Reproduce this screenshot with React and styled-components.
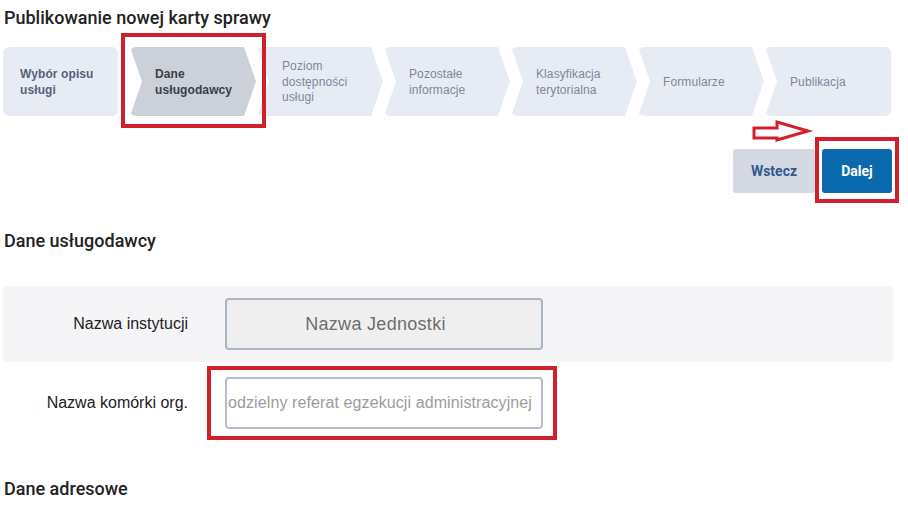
import React from "react";
import styled, { createGlobalStyle } from "styled-components";

const GlobalStyle = createGlobalStyle`
  html, body { margin: 0; padding: 0; background: #fff; }
  body { font-family: Roboto, "Liberation Sans", Arial, sans-serif; }
  * { box-sizing: border-box; }
`;

const RED = "#d11f2b";

const Page = styled.div`
  position: relative;
  width: 908px;
  height: 522px;
  overflow: hidden;
  padding: 8px 16px 0 3px;
`;

const Title = styled.h1`
  margin: 0 0 0 1px;
  font-family: Roboto, "Liberation Sans", sans-serif;
  font-weight: 500;
  font-size: 18px;
  line-height: 20px;
  color: #222;
`;

const SectionTitle = styled(Title)`
  margin-top: ${(p) => p.$top}px;
`;

const Stepper = styled.div`
  display: flex;
  gap: 1px;
  margin-top: 19px;
  height: 69px;
`;

const Step = styled.div`
  flex: 0 0 auto;
  width: ${(p) => (p.$first ? "115px" : "126px")};
  margin-right: ${(p) => (p.$first ? "11px" : "0")};
  height: 100%;
  display: flex;
  align-items: center;
  padding-top: 2px;
  padding-left: ${(p) => (p.$first ? "17px" : "25px")};
  padding-right: 14px;
  background: ${(p) => (p.$active ? "#cbd0d9" : "#e7ecf4")};
  border-radius: 6px;
  clip-path: ${(p) =>
    p.$first
      ? "none"
      : p.$last
      ? "polygon(0 0, 100% 0, 100% 100%, 0 100%, 12px 50%)"
      : "polygon(0 0, calc(100% - 12px) 0, 100% 50%, calc(100% - 12px) 100%, 0 100%, 12px 50%)"};
  font-family: "Liberation Sans", Arial, sans-serif;
  font-size: 12px;
  line-height: 15.5px;
  letter-spacing: 0.1px;
  font-weight: ${(p) => (p.$bold ? 700 : 400)};
  color: ${(p) => (p.$active ? "#3a3f4b" : p.$bold ? "#56627a" : "#7e8797")};
`;

const ButtonRow = styled.div`
  display: flex;
  justify-content: flex-end;
  gap: 7px;
  margin-top: 33px;
`;

const Button = styled.button`
  height: 44px;
  width: ${(p) => p.$w}px;
  border: none;
  border-radius: 3px;
  font-family: Roboto, "Liberation Sans", sans-serif;
  font-weight: 700;
  font-size: 14px;
  background: ${(p) => (p.$primary ? "#0b6aae" : "#d4d9e3")};
  color: ${(p) => (p.$primary ? "#ffffff" : "#2f5c8c")};
  cursor: pointer;
`;

const Panel = styled.div`
  margin-top: 35px;
  width: 890px;
`;

const Row = styled.div`
  display: flex;
  align-items: center;
  gap: 37px;
  height: ${(p) => p.$h}px;
  background: ${(p) => (p.$shaded ? "#f5f5f7" : "transparent")};
`;

const Label = styled.div`
  width: 185px;
  text-align: right;
  font-family: "Liberation Sans", Arial, sans-serif;
  font-size: 16px;
  color: #222;
`;

const Field = styled.div`
  width: 318px;
  height: 52px;
  display: flex;
  align-items: center;
  justify-content: ${(p) => (p.$readonly ? "center" : "flex-end")};
  padding: ${(p) => (p.$readonly ? "0 26px 0 9px" : "0 9px")};
  overflow: hidden;
  white-space: nowrap;
  border: 2px solid ${(p) => (p.$readonly ? "#a9b4c5" : "#b6bdc9")};
  border-radius: 4px;
  background: ${(p) => (p.$readonly ? "#efefef" : "#ffffff")};
  font-family: "Liberation Sans", Arial, sans-serif;
  font-size: ${(p) => (p.$readonly ? "18px" : "16px")};
  letter-spacing: ${(p) => (p.$readonly ? "0.3px" : "0.1px")};
  color: ${(p) => (p.$readonly ? "#6e6e6e" : "#9c9c9c")};
`;

const FieldText = styled.span`
  flex: 0 0 auto;
`;

const Mark = styled.div`
  position: absolute;
  left: ${(p) => p.$x}px;
  top: ${(p) => p.$y}px;
  width: ${(p) => p.$w}px;
  height: ${(p) => p.$h}px;
  border: 4px solid ${RED};
  pointer-events: none;
`;

const ArrowMark = styled.svg`
  position: absolute;
  left: 750px;
  top: 118px;
  width: 64px;
  height: 26px;
  pointer-events: none;
`;

const steps = [
  { label: ["Wybór opisu", "usługi"], bold: true, first: true },
  { label: ["Dane", "usługodawcy"], bold: true, active: true },
  { label: ["Poziom", "dostępności", "usługi"] },
  { label: ["Pozostałe", "informacje"] },
  { label: ["Klasyfikacja", "terytorialna"] },
  { label: ["Formularze"] },
  { label: ["Publikacja"], last: true },
];

export default function App() {
  return (
    <>
      <GlobalStyle />
      <Page>
        <Title>Publikowanie nowej karty sprawy</Title>
        <Stepper>
          {steps.map((s, i) => (
            <Step
              key={i}
              $first={s.first}
              $last={s.last}
              $active={s.active}
              $bold={s.bold}
            >
              <div>
                {s.label.map((l, j) => (
                  <div key={j}>{l}</div>
                ))}
              </div>
            </Step>
          ))}
        </Stepper>
        <ButtonRow>
          <Button $w={82}>Wstecz</Button>
          <Button $w={70} $primary>
            Dalej
          </Button>
        </ButtonRow>
        <SectionTitle $top={38}>Dane usługodawcy</SectionTitle>
        <Panel>
          <Row $h={76} $shaded>
            <Label>Nazwa instytucji</Label>
            <Field $readonly>
              <FieldText>Nazwa Jednostki</FieldText>
            </Field>
          </Row>
          <Row $h={82}>
            <Label>Nazwa komórki org.</Label>
            <Field>
              <FieldText>Samodzielny referat egzekucji administracyjnej</FieldText>
            </Field>
          </Row>
        </Panel>
        <SectionTitle $top={35}>Dane adresowe</SectionTitle>

        <Mark $x={121} $y={33} $w={145} $h={95} />
        <Mark $x={815} $y={137} $w={84} $h={66} />
        <Mark $x={207} $y={366} $w={350} $h={74} />
        <ArrowMark viewBox="0 0 64 26">
          <path
            d="M4 10 H27 V4 L58 13 L27 22 V20 H4 Z"
            fill="#ffffff"
            stroke={RED}
            strokeWidth="3"
            strokeLinejoin="miter"
          />
        </ArrowMark>
      </Page>
    </>
  );
}
